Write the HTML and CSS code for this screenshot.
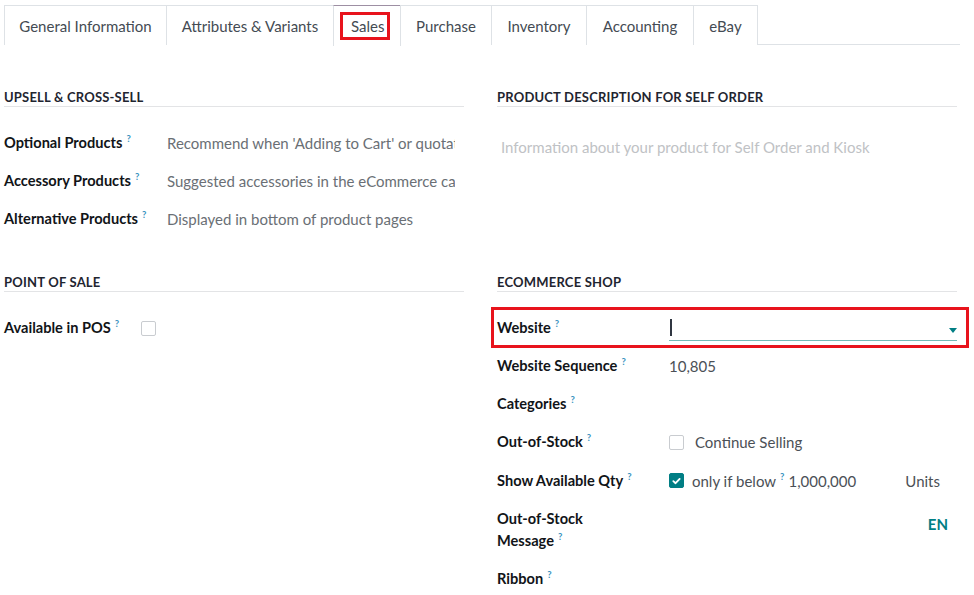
FILE: index.html
```html
<!DOCTYPE html>
<html>
<head>
<meta charset="utf-8">
<link rel="stylesheet" href="styles.css">
</head>
<body>
<div class="page">
  <div class="tabs">
    <div class="tab">General Information</div>
    <div class="tab">Attributes &amp; Variants</div>
    <div class="tab active"><span class="mark">Sales</span></div>
    <div class="tab">Purchase</div>
    <div class="tab">Inventory</div>
    <div class="tab">Accounting</div>
    <div class="tab">eBay</div>
  </div>

  <div class="grid">
    <section class="sec left">
      <h2 class="sec-title">UPSELL &amp; CROSS-SELL</h2>
      <div class="rows">
        <div class="row"><div class="label">Optional Products<sup>?</sup></div><div class="val ph">Recommend when 'Adding to Cart' or quotation</div></div>
        <div class="row"><div class="label">Accessory Products<sup>?</sup></div><div class="val ph">Suggested accessories in the eCommerce cart</div></div>
        <div class="row"><div class="label">Alternative Products<sup>?</sup></div><div class="val ph">Displayed in bottom of product pages</div></div>
      </div>
    </section>

    <section class="sec right">
      <h2 class="sec-title">PRODUCT DESCRIPTION FOR SELF ORDER</h2>
      <div class="desc">Information about your product for Self Order and Kiosk</div>
    </section>

    <section class="sec left">
      <h2 class="sec-title">POINT OF SALE</h2>
      <div class="rows">
        <div class="row"><div class="label pos">Available in POS<sup>?</sup></div><div class="val"><span class="cb"></span></div></div>
      </div>
    </section>

    <section class="sec right">
      <h2 class="sec-title">ECOMMERCE SHOP</h2>
      <div class="rows">
        <div class="row website"><div class="label">Website<sup>?</sup></div>
          <div class="val"><div class="select"><span class="caret"></span><span class="arrow"></span></div></div>
        </div>
        <div class="row"><div class="label">Website Sequence<sup>?</sup></div><div class="val num">10,805</div></div>
        <div class="row"><div class="label">Categories<sup>?</sup></div><div class="val"></div></div>
        <div class="row"><div class="label">Out-of-Stock<sup>?</sup></div><div class="val"><span class="cb"></span><span class="cb-text">Continue Selling</span></div></div>
        <div class="row"><div class="label">Show Available Qty<sup>?</sup></div>
          <div class="val qty"><span class="cb checked"><svg viewBox="0 0 14 14" width="14" height="14"><path d="M3.6 7.2 L6 9.4 L10.4 4.8" fill="none" stroke="#fff" stroke-width="2" stroke-linecap="round" stroke-linejoin="round"/></svg></span><span class="below">only if below<sup>?</sup></span><span class="amount">1,000,000</span><span class="units">Units</span></div>
        </div>
        <div class="row"><div class="label">Out-of-Stock<br>Message<sup>?</sup></div><div class="val msg"><span class="lang">EN</span></div></div>
        <div class="row"><div class="label">Ribbon<sup>?</sup></div><div class="val"></div></div>
      </div>
    </section>
  </div>
</div>
</body>
</html>
```

FILE: styles.css
```css
* { box-sizing: border-box; }
html, body { margin: 0; padding: 0; background: #fff; }
body {
  font-family: Lato, "Open Sans", sans-serif;
  font-size: 15px;
  color: #212529;
}
.page { padding: 5px 0 0 4px; width: 974px; }

.tabs {
  display: flex;
  width: 956px;
  border-bottom: 1px solid #dee2e6;
  height: 40px;
}
.tab {
  height: 40px;
  padding: 0;
  display: flex;
  align-items: center;
  justify-content: center;
  white-space: nowrap;
  border: 1px solid #dee2e6;
  border-bottom: none;
  margin-right: -1px;
  color: #444b53;
  font-size: 15px;
  background: #fff;
  flex: none;
}
.tab:nth-child(1) { width: 163px; }
.tab:nth-child(2) { width: 168px; }
.tab:nth-child(3) { width: 68px; justify-content: flex-start; padding-left: 6px; border-top-color: #9d8fa3; height: 41px; margin-bottom: -1px; }
.tab:nth-child(4) { width: 92px; }
.tab:nth-child(5) { width: 96px; }
.tab:nth-child(6) { width: 108px; }
.tab:nth-child(7) { width: 65px; }
.mark {
  border: 3px solid #e8131c;
  padding: 0 5px 0 8px;
  height: 28px;
  width: 50px;
  display: flex;
  align-items: center;
  margin-top: -1px;
}

.grid {
  display: grid;
  grid-template-columns: 460px 460px;
  column-gap: 33px;
  row-gap: 35px;
  padding-top: 43px;
}
.sec-title {
  margin: 0;
  font-size: 13px;
  font-weight: 700;
  line-height: 18px;
  letter-spacing: 0.2px;
  color: #1f2530;
  border-bottom: 1px solid #e3e4e6;
}
.rows { padding-top: 16px; }
.left .rows { padding-top: 16.5px; }
.row {
  display: flex;
  align-items: flex-start;
  min-height: 38.3px;
  padding: 8.15px 0;
  position: relative;
}
.label {
  font-weight: 700;
  line-height: 22px;
  color: #111418;
  font-size: 14.6px;
}
.left .label { width: 163px; flex: none; }
.right .label { width: 172px; flex: none; }
sup {
  color: #3a93c0;
  font-size: 9.5px;
  font-weight: 700;
  vertical-align: top;
  position: relative;
  top: -4px;
  margin-left: 4px;
  line-height: 22px;
}
.val {
  flex: 1;
  line-height: 22px;
  display: flex;
  align-items: center;
  min-height: 22px;
}
.left .val { margin-right: 9px; }
.ph { color: #6a6f75; white-space: nowrap; overflow: hidden; display: block; }
.right .val { width: 288px; flex: none; }

.desc {
  padding: 29px 0 0 4px;
  color: #c0c2c5;
  line-height: 22px;
}

.cb {
  width: 15px;
  height: 15px;
  border: 1px solid #c9ccd0;
  border-radius: 2px;
  display: inline-block;
  flex: none;
  background: #fff;
}
.left .cb { margin-left: -26px; }
.cb.checked {
  background: #017e84;
  border-color: #017e84;
  display: flex;
  align-items: center;
  justify-content: center;
}
.cb.checked svg { display: block; }
.cb-text { margin-left: 11px; color: #4b5056; }
.num { color: #4b5056; }

.qty { color: #4b5056; }
.below { margin-left: 8px; }
.below sup { margin-left: 4px; }
.amount { margin-left: 4px; }
.units { margin-left: auto; margin-right: 17px; }
.msg { justify-content: flex-end; align-items: flex-start; padding-top: 5px; }
.lang { color: #017e84; font-weight: 700; margin-right: 9px; }

.select {
  width: 288px;
  height: 24px;
  margin-bottom: -2px;
  border-bottom: 1px solid #74b9b6;
  position: relative;
}
.caret {
  position: absolute;
  left: 1px;
  top: 2px;
  width: 2px;
  height: 17px;
  background: #303641;
}
.arrow {
  position: absolute;
  right: 0;
  top: 11px;
  width: 0;
  height: 0;
  border-left: 4.5px solid transparent;
  border-right: 4.5px solid transparent;
  border-top: 5px solid #017e84;
}
.website::after {
  content: "";
  position: absolute;
  left: -6px;
  right: -12px;
  top: -1px;
  bottom: -1px;
  border: 3px solid #e8131c;
  pointer-events: none;
}
```
